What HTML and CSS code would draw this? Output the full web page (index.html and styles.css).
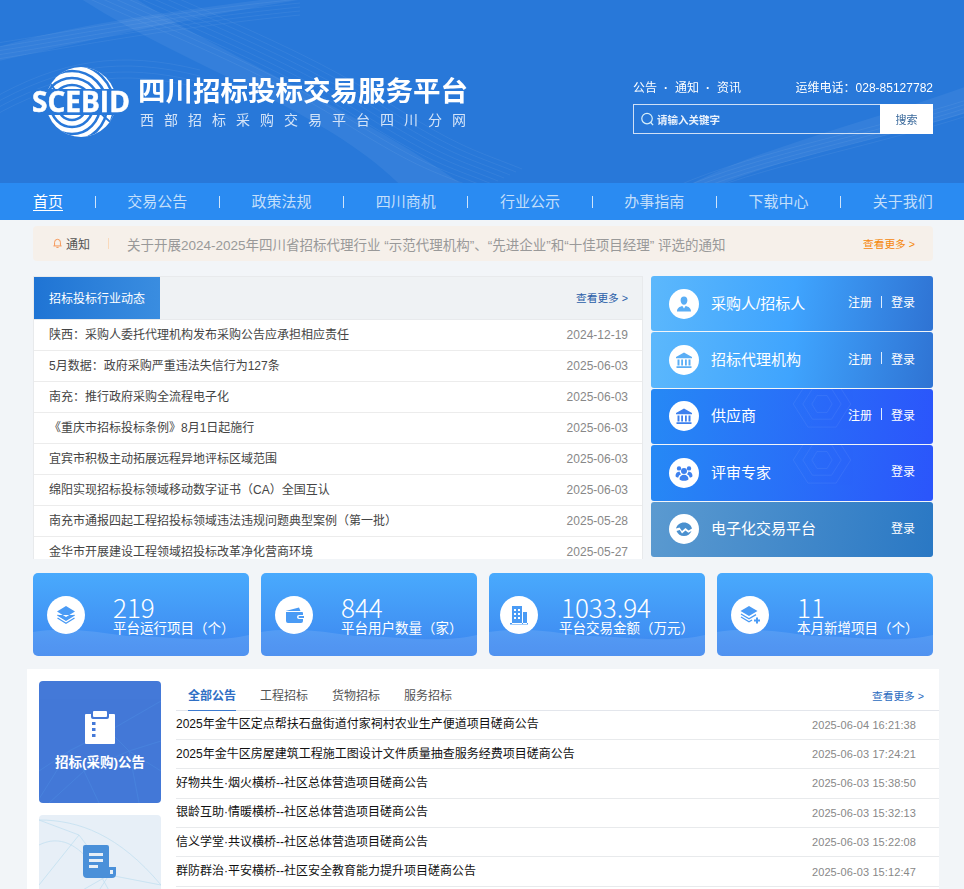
FILE: index.html
```html
<!DOCTYPE html>
<html lang="zh-CN">
<head>
<meta charset="utf-8">
<title>四川招标投标交易服务平台</title>
<link rel="stylesheet" href="styles.css">
</head>
<body>
<div class="page">
<header class="top">
  <svg class="top-bg" viewBox="0 0 964 183" preserveAspectRatio="none" aria-hidden="true">
    <defs>
      <path id="w1" d="M70 -10C180 40 260 70 340 120S430 170 480 190"/>
      <path id="w2" d="M-10 40C60 30 150 10 300 -5"/>
      <path id="w3" d="M660 190C740 150 860 130 970 95"/>
      <path id="w4" d="M-10 100C60 60 120 50 200 70"/>
    </defs>
    <path class="band" d="M75 -5L130 -5C230 60 360 110 470 190L405 190C330 110 190 70 75 -5Z"/>
    <path class="band" d="M-5 48C70 25 180 10 300 -5L330 -5C200 15 90 40 -5 62Z"/>
    <path class="band" d="M680 190C750 150 860 125 970 85L970 112C880 140 770 160 710 190Z"/>
    <g class="mesh">
      <use href="#w1"/><use href="#w1" x="6" y="-3"/><use href="#w1" x="12" y="-6"/><use href="#w1" x="18" y="-9"/><use href="#w1" x="24" y="-12"/><use href="#w1" x="30" y="-15"/><use href="#w1" x="36" y="-18"/><use href="#w1" x="42" y="-21"/>
      <use href="#w2" y="4"/><use href="#w2" y="8"/><use href="#w2" y="12"/><use href="#w2" y="16"/><use href="#w2" y="20"/>
      <use href="#w3" y="4"/><use href="#w3" y="8"/><use href="#w3" y="12"/><use href="#w3" y="16"/><use href="#w3" y="20"/>
      <use href="#w4"/><use href="#w4" y="6"/><use href="#w4" y="12"/><use href="#w4" y="18"/>
    </g>
  </svg>
  <div class="wrap top-in">
    <a class="brand" href="#">
      <svg class="logo" viewBox="0 0 100 72" aria-label="SCEBID">
        <defs><clipPath id="lc"><circle cx="50" cy="36" r="35"/></clipPath></defs>
        <circle cx="50" cy="36" r="35" fill="#fff"/>
        <g clip-path="url(#lc)" fill="none" stroke="#2878d9" stroke-width="2.6">
          <circle cx="41" cy="40" r="7"/><circle cx="41" cy="40" r="14"/><circle cx="41" cy="40" r="21"/><circle cx="41" cy="40" r="28"/><circle cx="41" cy="40" r="35"/><circle cx="41" cy="40" r="42"/>
          <path d="M12 8L30 32M88 64L66 44" stroke-width="2"/>
        </g>
        <rect x="0" y="23" width="100" height="26" fill="#2878d9"/>
        <text class="logo-t" x="50" y="46" text-anchor="middle">SCEBID</text>
      </svg>
      <div class="brand-t">
        <h1>四川招标投标交易服务平台</h1>
        <p>西部招标采购交易平台四川分网</p>
      </div>
    </a>
    <div class="top-r">
      <div class="top-links">
        <div class="quick"><a href="#">公告</a><i>·</i><a href="#">通知</a><i>·</i><a href="#">资讯</a></div>
        <div>运维电话：028-85127782</div>
      </div>
      <form class="search">
        <div class="search-f">
          <svg viewBox="0 0 16 16" class="s-ic"><circle cx="7.5" cy="7" r="5.6"/><path d="M11.5 11.2L14 14"/></svg>
          <span>请输入关键字</span>
        </div>
        <div class="search-b">搜索</div>
      </form>
    </div>
  </div>
</header>

<nav class="nav">
  <div class="wrap nav-in">
    <a class="on" href="#">首页</a><s></s>
    <a href="#">交易公告</a><s></s>
    <a href="#">政策法规</a><s></s>
    <a href="#">四川商机</a><s></s>
    <a href="#">行业公示</a><s></s>
    <a href="#">办事指南</a><s></s>
    <a href="#">下载中心</a><s></s>
    <a href="#">关于我们</a>
  </div>
</nav>

<div class="wrap notice">
  <svg class="bell" viewBox="0 0 12 12"><path d="M1.5 9.2h9M2.8 9V5.2a3.2 3.2 0 0 1 6.4 0V9M4.8 10.8h2.4"/></svg>
  <span class="n-l">通知</span>
  <span class="n-s"></span>
  <span class="n-t">关于开展2024-2025年四川省招标代理行业 “示范代理机构”、“先进企业”和“十佳项目经理” 评选的通知</span>
  <a class="n-m" href="#">查看更多 &gt;</a>
</div>

<main class="wrap">
  <section class="mid">
    <div class="news">
      <div class="news-h"><h2>招标投标行业动态</h2><a href="#">查看更多 &gt;</a></div>
      <ul>
        <li><a href="#">陕西：采购人委托代理机构发布采购公告应承担相应责任</a><time>2024-12-19</time></li>
        <li><a href="#">5月数据：政府采购严重违法失信行为127条</a><time>2025-06-03</time></li>
        <li><a href="#">南充：推行政府采购全流程电子化</a><time>2025-06-03</time></li>
        <li><a href="#">《重庆市招标投标条例》8月1日起施行</a><time>2025-06-03</time></li>
        <li><a href="#">宜宾市积极主动拓展远程异地评标区域范围</a><time>2025-06-03</time></li>
        <li><a href="#">绵阳实现招标投标领域移动数字证书（CA）全国互认</a><time>2025-06-03</time></li>
        <li><a href="#">南充市通报四起工程招投标领域违法违规问题典型案例（第一批）</a><time>2025-05-28</time></li>
        <li><a href="#">金华市开展建设工程领域招投标改革净化营商环境</a><time>2025-05-27</time></li>
      </ul>
    </div>
    <div class="roles">
      <div class="role r-a">
        <span class="ci"><svg viewBox="0 0 20 20"><path d="M10 2.500c2.200 0 3.400 1.600 3.400 3.700 0 2.300-1.500 4.600-3.400 4.600S6.600 8.500 6.600 6.200C6.600 4.100 7.800 2.500 10 2.500zM3 17.500c0-3.400 2.500-4.900 5.400-5.500L10 14.500 11.600 12c2.900.6 5.400 2.100 5.400 5.500z"/></svg></span>
        <b>采购人/招标人</b><span class="acts"><a href="#">注册</a><u></u><a href="#">登录</a></span>
      </div>
      <div class="role r-a">
        <span class="ci"><svg viewBox="0 0 20 20"><path d="M10 2.500L18 7v1.200H2V7zM3.500 9.500h2v6h-2zM7.200 9.500h1.800v6H7.200zM11 9.500h1.800v6H11zM14.500 9.500h2v6h-2zM2.500 16.300h15V18h-15z"/></svg></span>
        <b>招标代理机构</b><span class="acts"><a href="#">注册</a><u></u><a href="#">登录</a></span>
      </div>
      <div class="role r-b">
        <svg class="hex" viewBox="0 0 110 90"><path d="M30 4h50l26 41-26 41H30L4 45z"/><path d="M38 18h34l17 27-17 27H38L21 45z"/><path d="M46 30h18l9 15-9 15H46l-9-15z"/></svg>
        <span class="ci"><svg viewBox="0 0 20 20"><path class="ink2" d="M10 2.500L18 7v1.200H2V7zM3.500 9.500h2v6h-2zM7.200 9.500h1.800v6H7.200zM11 9.500h1.800v6H11zM14.500 9.500h2v6h-2zM2.500 16.300h15V18h-15z"/></svg></span>
        <b>供应商</b><span class="acts"><a href="#">注册</a><u></u><a href="#">登录</a></span>
      </div>
      <div class="role r-b">
        <svg class="hex" viewBox="0 0 110 90"><path d="M30 4h50l26 41-26 41H30L4 45z"/><path d="M38 18h34l17 27-17 27H38L21 45z"/><path d="M46 30h18l9 15-9 15H46l-9-15z"/></svg>
        <span class="ci"><svg viewBox="0 0 20 20"><path class="ink2" d="M5 3.200a2.200 2.200 0 1 1 0 4.400 2.200 2.200 0 0 1 0-4.400zM15 3.200a2.200 2.200 0 1 1 0 4.400 2.200 2.200 0 0 1 0-4.400zM10 5a3 3 0 1 1 0 6 3 3 0 0 1 0-6zM1.500 13c0-2.600 1.500-4.200 4-4.400.2 1 .8 2 1.600 2.600-1.600.7-2.500 1.800-2.800 3.400-1.700-.2-2.800-.8-2.800-1.600zM18.500 13c0-2.600-1.500-4.200-4-4.400-.2 1-.8 2-1.600 2.600 1.600.7 2.500 1.800 2.800 3.400 1.700-.2 2.800-.8 2.800-1.600zM5.500 16c0-2.700 2-4.300 4.500-4.300s4.500 1.600 4.500 4.300c0 1.100-2 1.800-4.500 1.800s-4.500-.7-4.500-1.800z"/></svg></span>
        <b>评审专家</b><span class="acts"><a href="#">登录</a></span>
      </div>
      <div class="role r-c">
        <span class="ci"><svg viewBox="0 0 20 20"><path class="ink3" d="M2 9.500C3 6 6 3.500 10 3.500s7 2.500 8 6l-3.500 2-3-2.500L8 12 5.500 8.500zM2.500 12l3.300-.9L8 14.500l3.500-3 2.800 2.300 3.200-1.800C16.300 15 13.500 17 10 17s-6.300-2-7.500-5z"/></svg></span>
        <b>电子化交易平台</b><span class="acts"><a href="#">登录</a></span>
      </div>
    </div>
  </section>

  <section class="stats">
    <div class="stat">
      <svg class="wave" viewBox="0 0 216 83" preserveAspectRatio="none"><path d="M0 59C30 54 60 58 100 64s80 8 116 4v15H0z"/><path d="M0 83c30-14 70-20 100-20s80 8 116-1v21z"/><path d="M62 83c30-12 60-18 90-15s40 0 64-3v18z"/></svg>
      <span class="sc"><svg viewBox="0 0 24 24"><path d="M12 3l9 5.500-9 5.500-9-5.500zM3 12l9 5.500 9-5.500" /><path class="ln" d="M3.500 12l8.500 5.200 8.500-5.200M3.500 15l8.500 5.200 8.500-5.200"/></svg></span>
      <div class="st"><strong>219</strong><span>平台运行项目（个）</span></div>
    </div>
    <div class="stat">
      <svg class="wave" viewBox="0 0 216 83" preserveAspectRatio="none"><path d="M0 59C30 54 60 58 100 64s80 8 116 4v15H0z"/><path d="M0 83c30-14 70-20 100-20s80 8 116-1v21z"/><path d="M62 83c30-12 60-18 90-15s40 0 64-3v18z"/></svg>
      <span class="sc"><svg viewBox="0 0 24 24"><path d="M3.500 8L17 4.500l1.500 3.500H6zM4 9h16a1 1 0 0 1 1 1v2h-4a2 2 0 0 0 0 4h4v2a2 2 0 0 1-2 2H6a2 2 0 0 1-2-2z"/><path d="M17.500 13H22v2h-4.500a1 1 0 0 1 0-2z"/></svg></span>
      <div class="st"><strong>844</strong><span>平台用户数量（家）</span></div>
    </div>
    <div class="stat s3">
      <svg class="wave" viewBox="0 0 216 83" preserveAspectRatio="none"><path d="M0 59C30 54 60 58 100 64s80 8 116 4v15H0z"/><path d="M0 83c30-14 70-20 100-20s80 8 116-1v21z"/><path d="M62 83c30-12 60-18 90-15s40 0 64-3v18z"/></svg>
      <span class="sc"><svg viewBox="0 0 24 24"><path fill-rule="evenodd" d="M5 3h10v18H5zM7 6v2h2V6zm4 0v2h2V6zM7 10v2h2v-2zm4 0v2h2v-2zM7 14v2h2v-2zm4 0v2h2v-2zM16 9h4v12h-4zM3 20h18v1.500H3z"/></svg></span>
      <div class="st"><strong>1033.94</strong><span>平台交易金额（万元）</span></div>
    </div>
    <div class="stat s4">
      <svg class="wave" viewBox="0 0 216 83" preserveAspectRatio="none"><path d="M0 59C30 54 60 58 100 64s80 8 116 4v15H0z"/><path d="M0 83c30-14 70-20 100-20s80 8 116-1v21z"/><path d="M62 83c30-12 60-18 90-15s40 0 64-3v18z"/></svg>
      <span class="sc"><svg viewBox="0 0 24 24"><path d="M11 3l8.500 5-8.500 5-8.500-5z"/><path class="ln" d="M3 11l8 4.800 7-4.200M3 14l8 4.800 3-1.800"/><path class="ln2" d="M19 14.500v6M16 17.500h6"/></svg></span>
      <div class="st"><strong>11</strong><span>本月新增项目（个）</span></div>
    </div>
  </section>

  <section class="board">
    <aside class="side">
      <div class="tile t-on">
        <svg class="mesh2" viewBox="0 0 122 122"><path d="M0 118L30 70 70 50 122 20M10 122L45 90 90 70 122 60M45 90L30 70M70 50L90 70 100 122M60 122L45 90M122 90L90 70M30 70L0 90"/></svg>
        <svg class="t-ic" viewBox="0 0 30 34"><path d="M0 4a1 1 0 0 1 1-1h5v3a2 2 0 0 0 2 2h14a2 2 0 0 0 2-2V3h5a1 1 0 0 1 1 1v28a1 1 0 0 1-1 1H1a1 1 0 0 1-1-1z"/><rect x="8" y="0" width="14" height="6" rx="1"/><rect class="d" x="7" y="11" width="3.500" height="3"/><rect class="d" x="7" y="17" width="3.500" height="3"/><rect class="d" x="7" y="23" width="3.500" height="3"/></svg>
        <p>招标(采购)公告</p>
      </div>
      <div class="tile t-off">
        <svg class="mesh3" viewBox="0 0 122 122"><path d="M0 5C40 5 80 20 122 70M0 30C30 15 60 40 90 122M0 70L40 20 70 60 30 122M40 20L0 5M70 60L122 70M0 100L70 60"/></svg>
        <svg class="t-ic2" viewBox="0 0 33 33"><path d="M2 0h22a2 2 0 0 1 2 2v20h7v7a4 4 0 0 1-4 4H4a4 4 0 0 1-4-4V2a2 2 0 0 1 2-2z"/><rect class="w" x="6" y="8" width="14" height="3"/><rect class="w" x="6" y="14" width="14" height="3"/><rect class="w" x="6" y="20" width="9" height="3"/><rect class="w" x="27" y="25" width="3" height="4"/></svg>
      </div>
    </aside>
    <div class="ann">
      <div class="tabs">
        <a class="on" href="#">全部公告</a><a href="#">工程招标</a><a href="#">货物招标</a><a href="#">服务招标</a>
        <a class="more" href="#">查看更多 &gt;</a>
      </div>
      <ul>
        <li><a href="#">2025年金牛区定点帮扶石盘街道付家祠村农业生产便道项目磋商公告</a><time>2025-06-04 16:21:38</time></li>
        <li><a href="#">2025年金牛区房屋建筑工程施工图设计文件质量抽查服务经费项目磋商公告</a><time>2025-06-03 17:24:21</time></li>
        <li><a href="#">好物共生·烟火横桥--社区总体营造项目磋商公告</a><time>2025-06-03 15:38:50</time></li>
        <li><a href="#">银龄互助·情暖横桥--社区总体营造项目磋商公告</a><time>2025-06-03 15:32:13</time></li>
        <li><a href="#">信义学堂·共议横桥--社区总体营造项目磋商公告</a><time>2025-06-03 15:22:08</time></li>
        <li><a href="#">群防群治·平安横桥--社区安全教育能力提升项目磋商公告</a><time>2025-06-03 15:12:47</time></li>
      </ul>
    </div>
  </section>
</main>
</div>
</body>
</html>
```
FILE: styles.css
```css
* { box-sizing: border-box; }
html, body { margin: 0; padding: 0; }
body { background: #f2f5f8; font-family: "Liberation Sans", "Noto Sans CJK SC", sans-serif; font-size: 12px; color: #333; }
a { color: inherit; text-decoration: none; }
ul { list-style: none; margin: 0; padding: 0; }
h1, h2, p { margin: 0; }
.page { height: 889px; overflow: hidden; }
.wrap { width: 900px; margin-left: 33px; }

.top { position: relative; height: 183px; background: #2878d9; overflow: hidden; color: #fff; }
.top-bg { position: absolute; left: 0; top: 0; width: 100%; height: 100%; }
.band { fill: #fff; opacity: .06; }
.mesh { fill: none; stroke: #fff; stroke-width: .6; opacity: .1; }
.top-in { position: relative; display: flex; justify-content: space-between; height: 183px; }
.brand { display: flex; align-items: flex-start; padding-top: 66px; margin-left: -2px; }
.logo { width: 100px; height: 72px; flex: none; }
.logo-t { font-family: "Open Sans", sans-serif; font-weight: 700; font-size: 28px; fill: #fff; stroke: #fff; stroke-width: .5; }
.brand-t { margin-left: 7px; padding-top: 5px; }
.brand-t h1 { font-size: 27.5px; line-height: 36px; font-weight: 700; white-space: nowrap; width: 330px; font-family: "Noto Sans CJK SC", sans-serif; }
.brand-t p { font-size: 14px; line-height: 20px; letter-spacing: 10px; color: #d4e4f8; white-space: nowrap; margin-left: 2px; margin-top: 3px; }
.top-r { width: 300px; padding-top: 79px; }
.top-links { display: flex; justify-content: space-between; line-height: 18px; height: 25px; }
.quick { display: flex; }
.quick i { width: 18px; text-align: center; font-style: normal; font-weight: 700; }
.search { display: flex; height: 30px; border: 1px solid #cfe0f6; }
.search-f { flex: 1; display: flex; align-items: center; padding-left: 6px; font-size: 10.5px; font-weight: 700; color: #e8f1fc; }
.s-ic { width: 15px; height: 15px; margin-right: 2px; fill: none; stroke: #d8f0fa; stroke-width: 1.3; }
.search-b { width: 53px; margin: -1px; background: #fff; color: #3b6a9c; font-size: 11px; display: flex; align-items: center; justify-content: center; }

.nav { background: #2a8bf2; height: 37px; }
.nav-in { display: flex; justify-content: space-between; align-items: center; height: 37px; }
.nav a { font-size: 15px; color: #c3dffb; line-height: 20px; }
.nav a.on { color: #fff; text-decoration: underline; text-underline-offset: 3px; }
.nav s { display: block; width: 1px; height: 12px; background: #cfe4fb; }

.notice { height: 35px; margin-top: 6px; background: #f6f0ea; border-radius: 4px; display: flex; align-items: center; padding-left: 19px; }
.bell { width: 11px; height: 12px; fill: none; stroke: #f58f4c; stroke-width: 1; flex: none; margin-top: -2px; }
.n-l { margin-left: 3px; color: #555; font-size: 12px; }
.n-s { width: 1px; height: 11px; background: #f9d9bb; margin: 0 18px; }
.n-t { flex: 1; color: #999; font-size: 13.5px; white-space: nowrap; overflow: hidden; }
.n-m { color: #f5870a; font-size: 10.7px; margin-right: 18px; white-space: nowrap; }

.mid { display: flex; justify-content: space-between; margin-top: 15px; height: 283px; }
.news { width: 610px; height: 283px; background: #fff; border: 1px solid #e8eaec; border-bottom: 0; overflow: hidden; }
.news-h { height: 43px; background: #eff2f4; border-bottom: 1px solid #e8eaec; display: flex; justify-content: space-between; align-items: center; padding-right: 14px; }
.news-h h2 { width: 126px; height: 42px; margin-bottom: 1px; background: linear-gradient(90deg, #1f74d4, #3a8de0); color: #fff; font-size: 12px; font-weight: 400; display: flex; align-items: center; padding-left: 15px; }
.news-h a { color: #2a5ea8; font-size: 10.7px; margin-top: -2px; }
.news li { height: 31px; border-bottom: 1px solid #ececec; display: flex; justify-content: space-between; align-items: center; padding: 0 14px 0 15px; color: #444; }
.news li a { margin-top: -4px; }
.news time { color: #888; }

.roles { width: 282px; height: 281px; display: grid; grid-template-rows: repeat(5, 1fr); gap: 1px; }
.role { position: relative; overflow: hidden; display: flex; align-items: center; border-radius: 3px; padding: 0 18px; color: #fff; }
.r-a { background: linear-gradient(100deg, #5cb8fc 0%, #3fa4fe 50%, #2f73d3 100%); }
.r-b { background: linear-gradient(100deg, #2689f5 0%, #2b55fb 100%); }
.r-c { background: linear-gradient(100deg, #5b9ad0 0%, #2a78c4 100%); }
.ci { position: relative; width: 30px; height: 30px; border-radius: 50%; background: #fff; display: flex; align-items: center; justify-content: center; flex: none; }
.ci svg { width: 20px; height: 20px; fill: #5aaef5; }
.ci .ink2 { fill: #3d80ee; }
.ci .ink3 { fill: #4a90cf; }
.role b { position: relative; margin-left: 12px; margin-top: -3px; font-weight: 400; font-size: 15px; flex: 1; }
.acts { position: relative; display: flex; align-items: center; font-size: 12px; margin-top: -4px; }
.acts u { display: block; width: 1px; height: 12px; background: #dcecff; margin: 0 9px; }
.hex { position: absolute; left: 140px; top: -18px; width: 62px; height: 66px; fill: none; stroke: #fff; stroke-width: 1.5; opacity: .07; }

.stats { display: flex; justify-content: space-between; margin-top: 14px; }
.stat { position: relative; overflow: hidden; width: 216px; height: 83px; border-radius: 5px; background: linear-gradient(180deg, #49aafd 0%, #3d86ef 100%); display: flex; align-items: flex-start; padding: 23px 0 0 14px; color: #fff; }
.wave { position: absolute; left: 0; top: 0; width: 100%; height: 100%; fill: #fff; opacity: .1; }
.sc { position: relative; flex: none; width: 38px; height: 38px; border-radius: 50%; background: #fff; display: flex; align-items: center; justify-content: center; }
.sc svg { width: 24px; height: 24px; fill: #4a9bf5; }
.sc .ln { fill: none; stroke: #4a9bf5; stroke-width: 1.3; }
.sc .ln2 { fill: none; stroke: #4a9bf5; stroke-width: 2; }
.st { position: relative; margin-left: 28px; margin-top: -3px; display: flex; flex-direction: column; }
.st strong { font-family: "Noto Sans CJK SC", sans-serif; font-size: 26px; font-weight: 300; line-height: 27px; }
.st span { font-size: 13.5px; line-height: 18px; white-space: nowrap; }
.s3 { padding-left: 11px; }
.s3 .st { margin-left: 23px; }
.s3 .st span { margin-left: -2px; }

.board { display: flex; width: 912px; margin: 13px 0 0 -6px; background: #fff; height: 400px; padding: 12px 0 0 12px; }
.side { width: 122px; flex: none; }
.tile { position: relative; overflow: hidden; width: 122px; height: 122px; border-radius: 4px; margin-bottom: 12px; }
.t-on { background: #4479d8; color: #fff; text-align: center; display: flex; flex-direction: column; align-items: center; padding-top: 30px; }
.t-off { background: #e7eff7; }
.mesh2 { position: absolute; inset: 0; fill: none; stroke: #4f93e6; stroke-width: .6; opacity: .6; }
.mesh3 { position: absolute; inset: 0; fill: none; stroke: #c3e0f0; stroke-width: .8; }
.t-ic { position: relative; width: 30px; height: 34px; fill: #fff; }
.t-ic .d { fill: #4479d8; }
.t-ic2 { position: absolute; left: 44px; top: 30px; width: 33px; height: 33px; fill: #4a90d9; }
.t-ic2 .w { fill: #e7eff7; }
.t-on p { position: relative; margin-top: 8px; font-size: 13.5px; font-weight: 700; line-height: 20px; white-space: nowrap; }
.ann { flex: 1; margin-left: 15px; }
.tabs { position: relative; height: 30px; border-bottom: 1px solid #e3e6ec; display: flex; padding-left: 12px; gap: 24px; line-height: 30px; color: #555; }
.tabs a { display: block; height: 30px; }
.tabs a.on { color: #2f6fc4; font-weight: 700; border-bottom: 1px solid #3d7bd0; }
.tabs a.more { margin-left: auto; margin-right: 15px; color: #2a6bc0; font-size: 10.7px; }
.ann ul { margin-top: -.5px; }
.ann li { height: 29.4px; border-bottom: 1px solid #e8eaec; display: flex; justify-content: space-between; align-items: center; color: #111; }
.ann li a { margin-top: -4px; }
.ann time { color: #888; font-size: 11px; letter-spacing: .1px; margin-right: 23px; }
```
